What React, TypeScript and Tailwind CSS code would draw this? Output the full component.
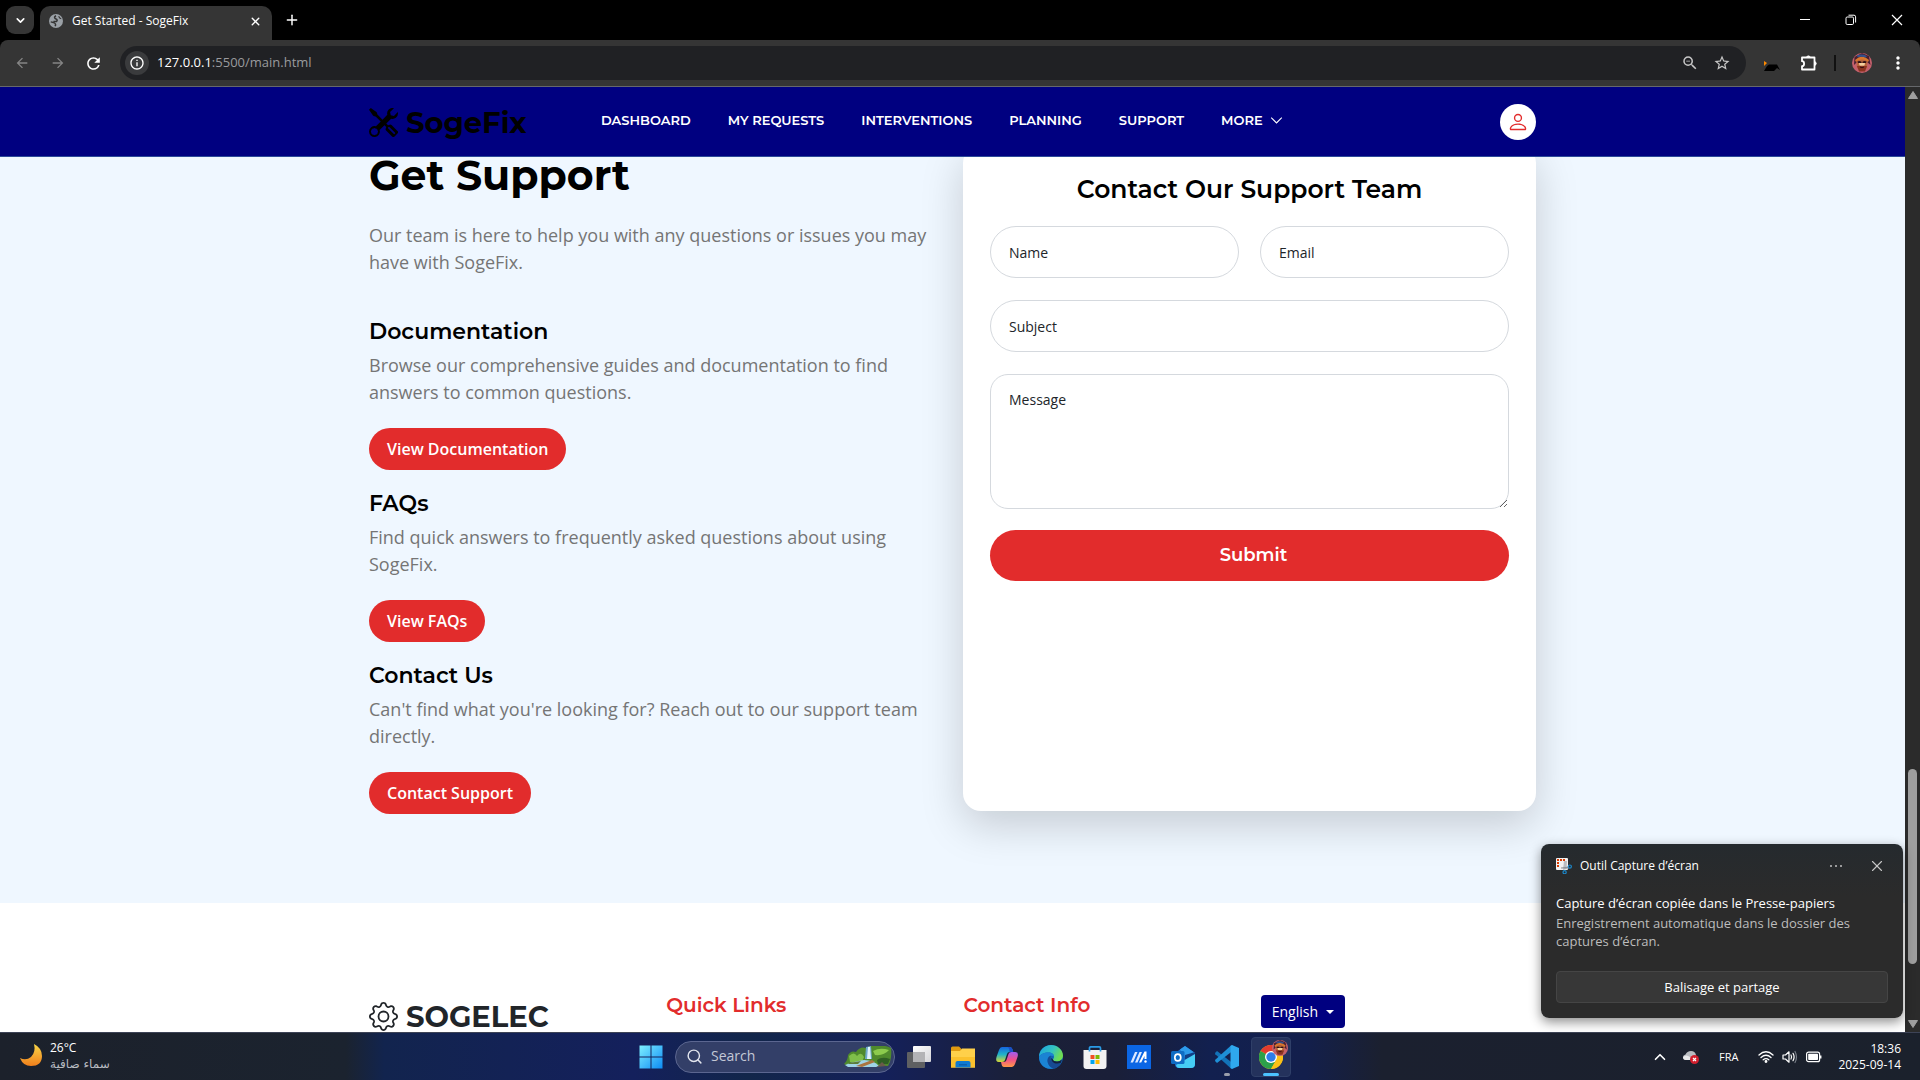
import React from "react";
import { BsChevronDown, BsGear, BsPerson, BsTools } from "react-icons/bs";
import {
  MdArrowBack,
  MdArrowForward,
  MdInfoOutline,
  MdMoreVert,
  MdRefresh,
  MdStarOutline,
  MdZoomOut,
} from "react-icons/md";
import { ChevronDown, ChevronUp, Plus, Search, X } from "lucide-react";

const heading = "font-['Montserrat','Inter',sans-serif]";

function Avatar({ className }: { className: string }) {
  return (
    <svg viewBox="0 0 20 20" className={className} aria-hidden="true">
      <clipPath id="avatar-clip">
        <circle cx="10" cy="10" r="10" />
      </clipPath>
      <g clipPath="url(#avatar-clip)">
        <rect width="20" height="20" fill="#c4606c" />
        <path d="M2 12 L2.500 4 L10 0 L17 3 L18.500 12 L15 9H5Z" fill="#4a2030" />
        <path d="M3 7 Q10 0 17 7 L16 9 Q10 5 4 9Z" fill="#d9772c" />
        <path d="M5 2.200 Q10 .5 15 3 L14 4.600 Q10 3 5.500 4.200Z" fill="#34508c" />
        <path d="M4.500 8 Q10 5 15.500 8 L15 15 Q10 19 5 15Z" fill="#b8643c" />
        <path d="M5.500 8.600 Q7.500 7.500 9.500 8.800 V10 H6Z" fill="#2d1015" />
        <path d="M10.500 8.800 Q12.500 7.500 14.500 8.600 L14 10 H10.500Z" fill="#2d1015" />
        <path d="M7 10 H13 L12.500 12.500 Q10 14 7.500 12.500Z" fill="#f3cf9c" />
        <path d="M5 13 Q10 12.500 15 13 L13 18.500 H7Z" fill="#8b3320" />
        <path d="M8 14 Q10 15.500 12 14" fill="none" stroke="#32100e" />
      </g>
    </svg>
  );
}

function PuzzleIcon() {
  return (
    <svg viewBox="0 0 18 18" className="size-[18px]" fill="none" stroke="currentColor" strokeWidth="1.800" strokeLinejoin="round" aria-hidden="true">
      <path d="M2 3.500H14.500V15.500H2V12.200C4.800 12.200 4.800 7.200 2 7.200Z" />
      <path d="M6.600 3.200A1.900 1.900 0 0 1 10.200 3.200Z" fill="currentColor" strokeWidth="1" />
      <path d="M14.900 7.700A1.900 1.900 0 0 1 14.900 11.300Z" fill="currentColor" strokeWidth="1" />
    </svg>
  );
}

function BrowserChrome() {
  return (
    <header className="shrink-0 bg-black font-['Open_Sans','Noto_Sans',sans-serif] text-white">
      <div className="flex h-10 items-end pl-1.5">
        <button aria-label="Search tabs" className="mb-1.5 flex size-7 items-center justify-center rounded-[9px] bg-[#353535]">
          <ChevronDown size={13} strokeWidth={3} />
        </button>
        <div className="ml-1.5 flex h-[34px] w-[232px] items-center rounded-t-[10px] bg-[#353535] pr-2.5 pb-1 pl-[9px]">
          <svg viewBox="0 0 16 16" className="size-3.5" aria-hidden="true">
            <circle cx="8" cy="8" r="8" fill="#9aa0a6" />
            <path d="M8 2 Q5 3.500 7.500 5.500 Q10.500 6.500 8.500 8.500 L5 8.500" fill="none" stroke="#353535" strokeWidth="1.800" />
            <path d="M2 9 L6 10 Q8.500 11.500 7 14" fill="none" stroke="#353535" strokeWidth="1.600" />
            <path d="M11 2.500 Q12 5 14 5.500" fill="none" stroke="#353535" strokeWidth="1.200" />
          </svg>
          <span className="ml-[9px] text-xs">Get Started - SogeFix</span>
          <button aria-label="Close tab" className="ml-auto">
            <X size={13} strokeWidth={2.6} />
          </button>
        </div>
        <button aria-label="New tab" className="mb-3 ml-3">
          <Plus size={16} strokeWidth={2.2} />
        </button>
        <div className="mb-3.5 ml-auto flex items-center">
          <button aria-label="Minimize" className="flex w-[46px] justify-center">
            <svg viewBox="0 0 12 12" className="size-3"><path d="M1 5.500H11" stroke="white" /></svg>
          </button>
          <button aria-label="Restore" className="flex w-[46px] justify-center">
            <svg viewBox="0 0 12 12" className="size-3" fill="none" stroke="white">
              <rect x="1" y="3" width="7.5" height="7.5" rx="1.2" />
              <path d="M3.500 1.200 H9 Q10.600 1.200 10.600 2.800 V8.500" />
            </svg>
          </button>
          <button aria-label="Close window" className="flex w-[46px] justify-center">
            <svg viewBox="0 0 12 12" className="size-3"><path d="M1 1L11 11M11 1L1 11" stroke="white" strokeWidth="1.2" /></svg>
          </button>
        </div>
      </div>
      <div className="flex h-[47px] items-center rounded-t-lg border-b border-[#66686b] bg-[#353535] pr-3 pl-3.5">
        <button aria-label="Back" className="text-[#858585]"><MdArrowBack size={16} /></button>
        <button aria-label="Forward" className="ml-5 text-[#858585]"><MdArrowForward size={16} /></button>
        <button aria-label="Reload" className="ml-[18px]"><MdRefresh size={19} /></button>
        <div className="ml-[17px] flex h-[34px] flex-1 items-center rounded-full bg-[#202124] pr-[15px] pl-[5px]">
          <button aria-label="Site information" className="flex size-6 items-center justify-center rounded-full bg-[#3a3b3d]">
            <MdInfoOutline size={16} />
          </button>
          <span className="ml-2 text-[13px]">
            127.0.0.1<span className="text-[#9a9b9e]">:5500/main.html</span>
          </span>
          <button aria-label="Zoom" className="ml-auto text-[#c7c7c7]"><MdZoomOut size={18} /></button>
          <button aria-label="Bookmark this page" className="ml-3.5 text-[#c7c7c7]"><MdStarOutline size={18} /></button>
        </div>
        <svg viewBox="0 0 16 16" className="ml-[18px] size-4" aria-hidden="true">
          <path d="M0 6 L3 8 L0 11Z" fill="#ff8a00" />
          <path d="M0 16 L3 11 L5 9.500 H13 L16 15 L13 13 L10 16Z" fill="#000" />
        </svg>
        <button aria-label="Extensions" className="ml-5"><PuzzleIcon /></button>
        <span className="ml-4 h-4 w-0.5 bg-[#111]" />
        <button aria-label="Profile" className="ml-4"><Avatar className="size-5" /></button>
        <button aria-label="Menu" className="ml-4"><MdMoreVert size={20} /></button>
      </div>
    </header>
  );
}

const navLinks = ["DASHBOARD", "MY REQUESTS", "INTERVENTIONS", "PLANNING", "SUPPORT"];

function Navbar() {
  return (
    <nav className="relative z-10 shrink-0 border-b border-[#2c4a9a] bg-[#000080]">
      <div className={`mx-auto flex h-[69px] w-full max-w-[1167px] items-center ${heading}`}>
        <a href="#home" className="flex w-[232px] shrink-0 items-center gap-2 pt-0.5 text-[29px] leading-9 font-bold text-black">
          <BsTools size={29} />
          SogeFix
        </a>
        <div className="flex items-center gap-[37px] pb-0.5 text-[13px] font-semibold text-white">
          {navLinks.map((label) => (
            <a key={label} href="#section">{label}</a>
          ))}
          <button className="flex items-center gap-[7px]">
            MORE <BsChevronDown size={13} strokeWidth={0.6} />
          </button>
        </div>
        <button aria-label="Account" className="ml-auto flex size-9 items-center justify-center rounded-full bg-white text-[#e22c2c]">
          <BsPerson size={22} />
        </button>
      </div>
    </nav>
  );
}

const topics = [
  {
    title: "Documentation",
    text: "Browse our comprehensive guides and documentation to find answers to common questions.",
    action: "View Documentation",
  },
  {
    title: "FAQs",
    text: "Find quick answers to frequently asked questions about using SogeFix.",
    action: "View FAQs",
  },
  {
    title: "Contact Us",
    text: "Can't find what you're looking for? Reach out to our support team directly.",
    action: "Contact Support",
  },
];

const field =
  "w-full border border-[#d5d9de] bg-white px-[18px] text-sm text-[#212529] placeholder:text-[#212529]";

function Support() {
  return (
    <section className="shrink-0 bg-[#eff7ff] pb-[89px]">
      <div className="mx-auto grid w-full max-w-[1167px] grid-cols-2 gap-[21px]">
        <div className="text-lg leading-[27px] text-[#757575]">
          <h1 className={`text-[41px] leading-9 font-bold text-black ${heading}`}>Get Support</h1>
          <p className="mt-[29px]">Our team is here to help you with any questions or issues you may have with SogeFix.</p>
          <div className="mt-[43px] flex flex-col gap-[21px]">
            {topics.map((topic) => (
              <article key={topic.title}>
                <h2 className={`text-[22px] leading-[26px] font-semibold text-black ${heading}`}>{topic.title}</h2>
                <p className="mt-[7px]">{topic.text}</p>
                <a href="#support" className="mt-[22px] flex h-[42px] w-fit items-center rounded-full bg-[#e22c2c] px-[18px] text-base font-semibold text-white">
                  {topic.action}
                </a>
              </article>
            ))}
          </div>
        </div>
        <form className="-mt-3 mb-[3px] rounded-[18px] bg-white p-[27px] shadow-[0_14px_43px_rgba(0,0,0,0.175)]">
          <h2 className={`text-center text-[25px] leading-[34px] font-semibold text-black ${heading}`}>
            Contact Our Support Team
          </h2>
          <div className="mt-5 grid grid-cols-2 gap-x-[21px] gap-y-[22px]">
            <input aria-label="Name" placeholder="Name" className={`h-[52px] rounded-full ${field}`} />
            <input aria-label="Email" type="email" placeholder="Email" className={`h-[52px] rounded-full ${field}`} />
            <input aria-label="Subject" placeholder="Subject" className={`col-span-2 h-[52px] rounded-full ${field}`} />
            <textarea aria-label="Message" placeholder="Message" className={`col-span-2 h-[135px] resize-y rounded-[18px] py-[15px] ${field}`} />
          </div>
          <button type="button" className={`mt-[21px] h-[51px] w-full rounded-full bg-[#e22c2c] pb-0.5 pl-2 text-lg font-semibold text-white ${heading}`}>
            Submit
          </button>
        </form>
      </div>
    </section>
  );
}

function Footer() {
  return (
    <footer className="flex-1 bg-white pt-[92px]">
      <div className="mx-auto grid w-full max-w-[1167px] grid-cols-4 items-start gap-[22px]">
        <div className={`mt-[7px] flex items-center gap-2 text-[29px] leading-[29px] font-bold text-[#212529] ${heading}`}>
          <BsGear size={29} />
          SOGELEC
        </div>
        <h3 className={`text-xl leading-5 font-semibold text-[#e22c2c] ${heading}`}>Quick Links</h3>
        <h3 className={`text-xl leading-5 font-semibold text-[#e22c2c] ${heading}`}>Contact Info</h3>
        <button className="flex h-[33px] w-fit items-center gap-2 rounded bg-[#000080] px-[11px] text-sm text-white">
          English
          <span className="border-x-4 border-t-4 border-x-transparent border-t-white" />
        </button>
      </div>
    </footer>
  );
}

function ScrollBar() {
  return (
    <div className="flex w-[15px] shrink-0 flex-col items-center bg-[#2b2b2b] py-1">
      <svg viewBox="0 0 10 8" className="h-2 w-2.5"><path d="M5 0.500L9.500 7.500H.5Z" fill="#9f9f9f" stroke="#9f9f9f" strokeLinejoin="round" /></svg>
      <div className="flex-[670]" />
      <div className="w-[9px] flex-[195] rounded-full bg-[#9f9f9f]" />
      <div className="flex-[56]" />
      <svg viewBox="0 0 10 8" className="h-2 w-2.5"><path d="M5 7.500L9.500 .5H.5Z" fill="#9f9f9f" stroke="#9f9f9f" strokeLinejoin="round" /></svg>
    </div>
  );
}

function Toast() {
  return (
    <aside className="absolute right-[17px] bottom-[14px] z-20 w-[362px] rounded-lg bg-gradient-to-b from-[#252a2e] to-[#2b2b2b] to-30% p-[15px] pt-3.5 text-[13px] leading-[18px] text-white shadow-[0_4px_12px_rgba(0,0,0,0.45)]">
      <div className="flex h-4 items-center text-xs">
        <svg viewBox="0 0 16 16" className="size-4" aria-hidden="true">
          <rect width="12" height="12" rx="1" fill="#f1f1f1" />
          <path d="M1 1H3V3H1ZM4 1H6V3H4ZM7 1H9V3H7ZM1 4H3V6H1ZM1 7H3V9H1Z" fill="#d83b01" />
          <path d="M8 3 H11 L10.500 11 L7 12Z" fill="#b9bcc0" />
          <path d="M5 9.500 L13 8.500 V10.500 L5 10.500Z" fill="#8d9196" />
          <circle cx="13.800" cy="8.600" r="1.600" fill="none" stroke="#1c87c9" strokeWidth="1.200" />
          <circle cx="8.600" cy="14.200" r="1.600" fill="none" stroke="#1c87c9" strokeWidth="1.200" />
        </svg>
        <span className="ml-2">Outil Capture d’écran</span>
        <button aria-label="More options" className="ml-auto flex gap-[3px]">
          <span className="size-0.5 rounded-full bg-[#c0c0c0]" />
          <span className="size-0.5 rounded-full bg-[#c0c0c0]" />
          <span className="size-0.5 rounded-full bg-[#c0c0c0]" />
        </button>
        <button aria-label="Dismiss" className="mr-0.5 ml-[26px] text-[#c8c8c8]"><X size={18} strokeWidth={1.5} /></button>
      </div>
      <p className="mt-5">Capture d’écran copiée dans le Presse-papiers</p>
      <p className="mt-0.5 text-[#bdbdbd]">Enregistrement automatique dans le dossier des captures d’écran.</p>
      <button className="mt-[21px] h-8 w-full rounded border border-[#454545] bg-[#373737]">Balisage et partage</button>
    </aside>
  );
}

function WindowsLogo() {
  return (
    <svg viewBox="0 0 24 24" className="size-6">
      <linearGradient id="win" x1="0" y1="0" x2="1" y2="1">
        <stop offset="0" stopColor="#7ef0ff" />
        <stop offset="1" stopColor="#0d8bf5" />
      </linearGradient>
      <path d="M.5 .5H11.500V11.500H.5ZM12.500 .5H23.500V11.500H12.500ZM.5 12.500H11.500V23.500H.5ZM12.500 12.500H23.500V23.500H12.500Z" fill="url(#win)" />
    </svg>
  );
}

function WaterfallArt() {
  return (
    <svg viewBox="0 0 48 22" className="h-[22px] w-12" aria-hidden="true">
      <path d="M0 18 Q4 14 4 9 Q7 4 12 6 Q16 0 22 2 L26 0 H34 Q42 -1 47 2 Q48 9 46 16 L44 20 H4Z" fill="#4f8a2c" />
      <path d="M5 10 Q10 5 13 10 Q17 5 20 11 L18 16 H6Z" fill="#7fbf4a" />
      <path d="M29 5 Q36 1 45 4 Q40 10 31 9Z" fill="#8ccb4d" />
      <path d="M33 14 Q38 10 46 13 L44 18 H34Z" fill="#2f5f24" />
      <path d="M22 1 L27 0 L28 13 H21Z" fill="#6ea9c9" />
      <path d="M24 1 H26 L27 13 H23Z" fill="#dff2fb" />
      <path d="M1 19 Q8 16 20 14 Q30 14 35 20 L32 21 H4Z" fill="#9fd3e6" />
      <path d="M5 17 L17 15 L14 18 H4Z" fill="#5d7c3a" />
      <path d="M12 20 L28 14 L31 16 L18 21Z" fill="#a9733f" />
      <path d="M33 21 L38 16 L42 20Z" fill="#6b5a4a" />
    </svg>
  );
}

function TaskViewIcon() {
  return (
    <svg viewBox="0 0 24 24" className="size-6">
      <linearGradient id="tv" x1="0" y1="0" x2="1" y2="1"><stop offset="0" stopColor="#fff" /><stop offset="1" stopColor="#d4d4d8" /></linearGradient>
      <rect x="6" y="1" width="18" height="16" rx="1" fill="url(#tv)" />
      <rect x="0" y="7" width="18" height="16" rx="1" fill="#5f6062" />
      <rect x="6" y="7" width="12" height="10" fill="#b3b3b6" />
    </svg>
  );
}

function FolderIcon() {
  return (
    <svg viewBox="0 0 24 24" className="size-6">
      <path d="M0 3Q0 1.500 1.500 1.500H8L10.500 4V8H0Z" fill="#e09a10" />
      <path d="M0 6H9L11 3.500H24V22.500H0Z" fill="#ffd04a" />
      <path d="M0 12H24V22.500H0Z" fill="#fbc12d" />
      <path d="M4.500 22.500V18Q4.500 16 6.500 16H17.500Q19.500 16 19.500 18V22.500Z" fill="#0f7ad1" />
      <path d="M8 19.200H16V20.400H8Z" fill="#0b5aa6" />
    </svg>
  );
}

function CopilotIcon() {
  return (
    <svg viewBox="0 0 24 24" className="size-6">
      <linearGradient id="cpa" x1="0" y1="0" x2="0" y2="1"><stop offset="0" stopColor="#1565e0" /><stop offset=".5" stopColor="#20b3c8" /><stop offset="1" stopColor="#d8d832" /></linearGradient>
      <linearGradient id="cpb" x1="0" y1="1" x2="0" y2="0"><stop offset="0" stopColor="#ff9a45" /><stop offset=".5" stopColor="#f0508a" /><stop offset="1" stopColor="#a05cf0" /></linearGradient>
      <path d="M7 2H15Q17 2 17.800 5L18.200 7H14.500Q12.500 7 12 9L10 15Q9.500 17 7 17H4Q0 17 1.500 12L4 5Q5 2 7 2Z" fill="url(#cpa)" />
      <path d="M17 22H9Q7 22 6.500 19L6 17H8.500Q11 17 11.500 15L13.500 9Q14 7 16.500 7H20Q24 7 22.500 12L20 19Q19 22 17 22Z" fill="url(#cpb)" />
      <path d="M13 2H15Q17 2 17.800 5L18.200 7H14.500Q15 4 13 2Z" fill="#1b4fc4" />
    </svg>
  );
}

function EdgeIcon() {
  return (
    <svg viewBox="0 0 24 24" className="size-6">
      <linearGradient id="ea" x1="0" y1="0" x2="1" y2=".4"><stop offset="0" stopColor="#1ba3e0" /><stop offset=".6" stopColor="#35c3c0" /><stop offset="1" stopColor="#6fdc52" /></linearGradient>
      <circle cx="12" cy="12" r="12" fill="#0f62b4" />
      <path d="M0 12C0 5 5.500 0 12 0S24 5 24 10.500C24 14 21.500 16.500 18 16.500C15.500 16.500 14 15.500 14 14.500C14 14 15 13.300 15 11.500C15 9 12.500 7.500 9.500 7.500C5 7.500 1 9.500 0 12Z" fill="url(#ea)" />
      <path d="M0 12C1 9.500 5 7.500 9.500 7.500C12.500 7.500 15 9 15 11.500C12 9.500 8.500 12 8.500 15.500C8.500 19 11 22.500 14.500 23.500C6 25.500 0 19 0 12Z" fill="#1b83d3" />
      <path d="M8.500 15.500C8.500 13 10 11 12 10.500C11 12.500 11 19.500 22 18C19.500 22 16.500 23.500 14.500 23.500C11 22.500 8.500 19 8.500 15.500Z" fill="#174a92" />
      <path d="M14 14.500C14 15.500 15.500 16.500 18 16.500C20 16.500 21.500 15.800 22.800 14.500L22 17.800C17 20 12 17.500 12.200 13Z" fill="#14213f" />
    </svg>
  );
}

function StoreIcon() {
  return (
    <svg viewBox="0 0 24 24" className="size-6">
      <path d="M.5 5H23.500V21Q23.500 24 20.500 24H3.500Q.5 24 .5 21Z" fill="#f2f2f2" />
      <path d="M6.500 6.500V3Q6.500 1.800 7.700 1.800H16.300Q17.500 1.800 17.500 3V6.500" fill="none" stroke="#2a9be6" strokeWidth="1.700" />
      <path d="M7.500 10H11.500V14H7.500Z" fill="#f25022" />
      <path d="M12.500 10H16.500V14H12.500Z" fill="#7fba00" />
      <path d="M7.500 15H11.500V19H7.500Z" fill="#00a4ef" />
      <path d="M12.500 15H16.500V19H12.500Z" fill="#ffb900" />
    </svg>
  );
}

function MyAsusIcon() {
  return (
    <svg viewBox="0 0 24 24" className="size-6">
      <rect width="24" height="24" fill="#0b66e4" />
      <path d="M3.500 17.500L8 7H10.500L6 17.500Z M8 17.500L12.500 7H15L10.500 17.500Z" fill="#dce9ff" />
      <path d="M12 17.500L17.500 6.500H19.500V14H17.500V11L14.200 17.500Z" fill="#fff" />
      <circle cx="18.500" cy="16.500" r="1.200" fill="#fff" />
    </svg>
  );
}

function OutlookIcon() {
  return (
    <svg viewBox="0 0 24 24" className="size-6">
      <path d="M4 8L14 1L24 8V19Q24 23 20 23H8Q4 23 4 19Z" fill="#1b6fd0" />
      <path d="M9 4.500L14 1L24 8L15 14Z" fill="#2d9bea" />
      <path d="M14 10L24 7V10L14 15Z" fill="#123f86" />
      <path d="M5 20L24 9V19Q24 23 20 23H8Q5.500 23 5 20Z" fill="#45cdf5" />
      <rect x="0" y="6" width="13.500" height="13" rx="1.500" fill="#0f6cc4" />
      <ellipse cx="6.800" cy="12.500" rx="3" ry="3.400" fill="none" stroke="#fff" strokeWidth="1.700" />
    </svg>
  );
}

function VsCodeIcon() {
  return (
    <svg viewBox="0 0 24 24" className="size-6">
      <path d="M0 8L2 6L17.500 18V23.500L16 23.500L.3 9.200Z" fill="#1272b8" />
      <path d="M0 16L2 18L17.500 6V.5L16 .5L.3 14.800Z" fill="#1e8fd6" />
      <path d="M17 0L24 3V21L17 24L15.500 23V1Z" fill="#2fa8ee" />
    </svg>
  );
}

function ChromeIcon() {
  return (
    <svg viewBox="0 0 24 24" className="size-6">
      <circle cx="12" cy="12" r="12" fill="#fbc116" />
      <path d="M12 12L1.600 6A12 12 0 0 1 22.400 6H12Z" fill="#e33b2e" />
      <path d="M12 12L1.600 6A12 12 0 0 0 12 24L17.200 15Z" fill="#2da04a" />
      <path d="M22.400 6A12 12 0 0 1 12 24L17.200 15L17 9L12 6Z" fill="#fbc116" />
      <circle cx="12" cy="12" r="6" fill="#fff" />
      <circle cx="12" cy="12" r="4.700" fill="#2f7de9" />
    </svg>
  );
}

const apps = [
  { name: "Task view", icon: <TaskViewIcon /> },
  { name: "File Explorer", icon: <FolderIcon /> },
  { name: "Copilot", icon: <CopilotIcon /> },
  { name: "Edge", icon: <EdgeIcon /> },
  { name: "Microsoft Store", icon: <StoreIcon /> },
  { name: "MyASUS", icon: <MyAsusIcon /> },
  { name: "Outlook", icon: <OutlookIcon /> },
];

function Taskbar() {
  return (
    <footer className="grid h-12 shrink-0 grid-cols-[1fr_auto_1fr] items-center border-t border-[#3d4356] bg-[linear-gradient(90deg,#1c212b_0%,#1b232f_18%,#12244e_20%,#14205c_33%,#12264a_39%,#14205a_46%,#1b2038_53%,#1a1f38_58%,#12204f_63%,#131f4c_68%,#1b202f_72%,#1b212c_100%)] font-['Open_Sans','Noto_Sans',sans-serif] text-white">
      <div className="flex items-center pl-5">
        <svg viewBox="0 0 22 28" className="h-7 w-[22px]" aria-hidden="true">
          <linearGradient id="moon" x1="0" y1="0" x2="0" y2="1"><stop offset="0" stopColor="#f8d648" /><stop offset="1" stopColor="#f07f1c" /></linearGradient>
          <path d="M14 1Q22 5 22 13Q22 23 11 23Q3 23 0 15Q6 18 11 14Q16 9 14 1Z" fill="url(#moon)" />
        </svg>
        <div className="ml-2 pb-0.5 text-xs leading-4">
          <div>26°C</div>
          <div lang="ar" dir="rtl" className="font-['DejaVu_Sans',sans-serif] text-[#b9bcc2]">سماء صافية</div>
        </div>
      </div>
      <div className="flex items-center pl-2.5">
        <button aria-label="Start"><WindowsLogo /></button>
        <label className="ml-3 flex h-8 w-[220px] items-center rounded-full border border-[#5b6690] bg-[#333f68] pr-0.5 pl-2.5">
          <Search size={17} strokeWidth={2} className="text-[#e3e6ee]" />
          <input aria-label="Search" placeholder="Search" className="ml-2 w-0 flex-1 pb-0.5 text-sm placeholder:text-[#c3c8d6]" />
          <WaterfallArt />
        </label>
        <div className="ml-3 flex gap-5">
          {apps.map((app) => (
            <button key={app.name} aria-label={app.name}>{app.icon}</button>
          ))}
          <button aria-label="Visual Studio Code" className="relative">
            <VsCodeIcon />
            <span className="absolute -bottom-[7px] left-[9px] h-[3px] w-1.5 rounded-full bg-[#9a9eab]" />
          </button>
        </div>
        <button aria-label="Google Chrome" className="relative ml-3 flex size-10 items-center justify-center rounded border border-[#2f3f68] bg-[#24325c]">
          <ChromeIcon />
          <Avatar className="absolute top-0.5 right-0.5 size-4" />
          <span className="absolute bottom-0 h-[3px] w-4 rounded-full bg-[#4cc2ff]" />
        </button>
      </div>
      <div className="flex items-center justify-end pr-[19px] text-xs leading-4">
        <ChevronUp size={18} strokeWidth={2.2} />
        <svg viewBox="0 0 16 14" className="ml-3.5 h-3.5 w-4" aria-hidden="true">
          <path d="M3 10Q0 10 0 7Q0 5 2.500 4.500Q4 1 8 1Q12 1 13 5V10Z" fill="#b9bbc0" />
          <path d="M3 10Q0 10 0 7Q3 4 7 7L8 10Z" fill="#e8e8ea" />
          <circle cx="11.500" cy="9.500" r="4.500" fill="#d11f2e" />
          <path d="M10 8L13 11M13 8L10 11" stroke="#fff" strokeWidth="1.200" />
        </svg>
        <span className="ml-5 text-[11px]">FRA</span>
        <svg viewBox="0 0 16 14" className="ml-5 h-3.5 w-4" fill="none" stroke="white" strokeWidth="1.300" strokeLinecap="round" aria-hidden="true">
          <path d="M1 5Q8-1.500 15 5M3 7.500Q8 3 13 7.500M5.200 9.800Q8 7.500 10.800 9.800" />
          <circle cx="8" cy="11.500" r=".8" fill="white" />
        </svg>
        <svg viewBox="0 0 16 14" className="ml-2 h-3.5 w-4" fill="none" stroke="white" strokeWidth="1.200" strokeLinejoin="round" aria-hidden="true">
          <path d="M1 5H3.500L7 1.800V12.200L3.500 9H1Z" />
          <path d="M9 5Q10.200 7 9 9M11 3.300Q13.200 7 11 10.700" strokeLinecap="round" />
          <path d="M13 1.500Q16 7 13 12.500" stroke="#777c86" strokeLinecap="round" />
        </svg>
        <svg viewBox="0 0 16 12" className="ml-2 h-3 w-4" aria-hidden="true">
          <rect x=".6" y="1.200" width="13" height="9.500" rx="2" fill="none" stroke="white" strokeWidth="1.200" />
          <rect x="2.200" y="2.800" width="9.800" height="6.300" rx=".8" fill="white" />
          <path d="M14.700 4.500V7.500" stroke="white" strokeWidth="1.500" />
        </svg>
        <div className="ml-4 text-right">
          <div>18:36</div>
          <div>2025-09-14</div>
        </div>
      </div>
    </footer>
  );
}

export default function App() {
  return (
    <div className="flex h-screen flex-col overflow-hidden font-['Open_Sans','Noto_Sans',sans-serif]">
      <BrowserChrome />
      <div className="relative flex min-h-0 flex-1">
        <main className="flex min-w-0 flex-1 flex-col overflow-hidden">
          <Navbar />
          <Support />
          <Footer />
        </main>
        <ScrollBar />
        <Toast />
      </div>
      <Taskbar />
    </div>
  );
}
